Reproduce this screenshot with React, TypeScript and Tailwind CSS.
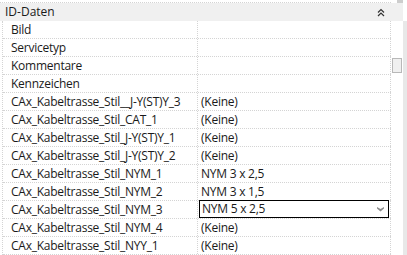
const rows: { name: string; value: string; editing?: boolean }[] = [
  { name: "Bild", value: "" },
  { name: "Servicetyp", value: "" },
  { name: "Kommentare", value: "" },
  { name: "Kennzeichen", value: "" },
  { name: "CAx_Kabeltrasse_Stil__J-Y(ST)Y_3", value: "(Keine)" },
  { name: "CAx_Kabeltrasse_Stil_CAT_1", value: "(Keine)" },
  { name: "CAx_Kabeltrasse_Stil_J-Y(ST)Y_1", value: "(Keine)" },
  { name: "CAx_Kabeltrasse_Stil_J-Y(ST)Y_2", value: "(Keine)" },
  { name: "CAx_Kabeltrasse_Stil_NYM_1", value: "NYM 3 x 2,5" },
  { name: "CAx_Kabeltrasse_Stil_NYM_2", value: "NYM 3 x 1,5" },
  { name: "CAx_Kabeltrasse_Stil_NYM_3", value: "NYM 5 x 2,5", editing: true },
  { name: "CAx_Kabeltrasse_Stil_NYM_4", value: "(Keine)" },
  { name: "CAx_Kabeltrasse_Stil_NYY_1", value: "(Keine)" },
];

function CollapseIcon() {
  return (
    <svg width="8" height="9" viewBox="0 0 8 9" fill="none" stroke="#333" strokeWidth="1.2">
      <path d="M1 4.5 L4 1.5 L7 4.5" />
      <path d="M1 8 L4 5 L7 8" />
    </svg>
  );
}

function DropArrow() {
  return (
    <svg width="7" height="5" viewBox="0 0 7 5" fill="#8a8a8a">
      <path d="M0 0 L3.5 2 L7 0 L7 1.5 L3.5 4.5 L0 1.5 Z" />
    </svg>
  );
}

export default function App() {
  return (
    <div
      className="w-[407px] h-[255px] overflow-hidden bg-white flex text-[12px] text-[#1a1a1a]"
      style={{ fontFamily: '"Open Sans", "Noto Sans", sans-serif' }}
    >
      <div className="flex-1 flex flex-col min-w-0">
        {/* top spacer */}
        <div className="h-[3px] shrink-0 border-b border-dotted border-[#d4d4d4]" />

        {/* Category header */}
        <div className="h-[18px] shrink-0 bg-[#f0f0f0] flex items-center pl-[5px] pr-[6px]">
          <span className="flex-1 leading-none">ID-Daten</span>
          <CollapseIcon />
        </div>

        {/* Property rows */}
        <div className="flex">
          <div className="w-[3px] shrink-0 border-r border-dotted border-[#d4d4d4]" />
          <div className="flex-1 flex flex-col">
            {rows.map((r) => (
              <div key={r.name} className="h-[18px] shrink-0 flex border-b border-dotted border-[#d4d4d4]">
                <div className="w-[195px] shrink-0 pl-[8px] flex items-center border-r border-dotted border-[#d4d4d4] whitespace-nowrap overflow-hidden tracking-[-0.25px]">
                  {r.name}
                </div>
                {r.editing ? (
                  <div className="flex-1 flex items-center pl-[1px] pr-[1px] border-r border-dotted border-[#d4d4d4]">
                    <div className="flex-1 h-[18px] -mt-[1px] border border-black flex items-center pl-[2px] pr-[4px] tracking-[-0.25px]">
                      <span className="flex-1">{r.value}</span>
                      <DropArrow />
                    </div>
                  </div>
                ) : (
                  <div className="flex-1 flex items-center pl-[3px] border-r border-dotted border-[#d4d4d4] whitespace-nowrap tracking-[-0.25px]">
                    {r.value}
                  </div>
                )}
              </div>
            ))}
          </div>
        </div>
      </div>

      {/* Scrollbar */}
      <div className="w-[16px] shrink-0 flex flex-col">
        <div className="h-[3px] shrink-0 flex">
          <div className="w-[6px]" />
          <div className="w-[6px] bg-[#cdcdcd]" />
        </div>
        <div className="h-[18px] shrink-0 bg-[#f0f0f0] mr-[4px]" />
        <div className="flex-1 flex">
          <div className="flex-1 pt-[37px] pl-[1px]">
            <div className="w-[10px] h-[15px] border border-[#b8b8b8] bg-[#f0f0f0]" />
          </div>
          <div className="w-[4px] bg-[#e8e8e8]" />
        </div>
      </div>
    </div>
  );
}
